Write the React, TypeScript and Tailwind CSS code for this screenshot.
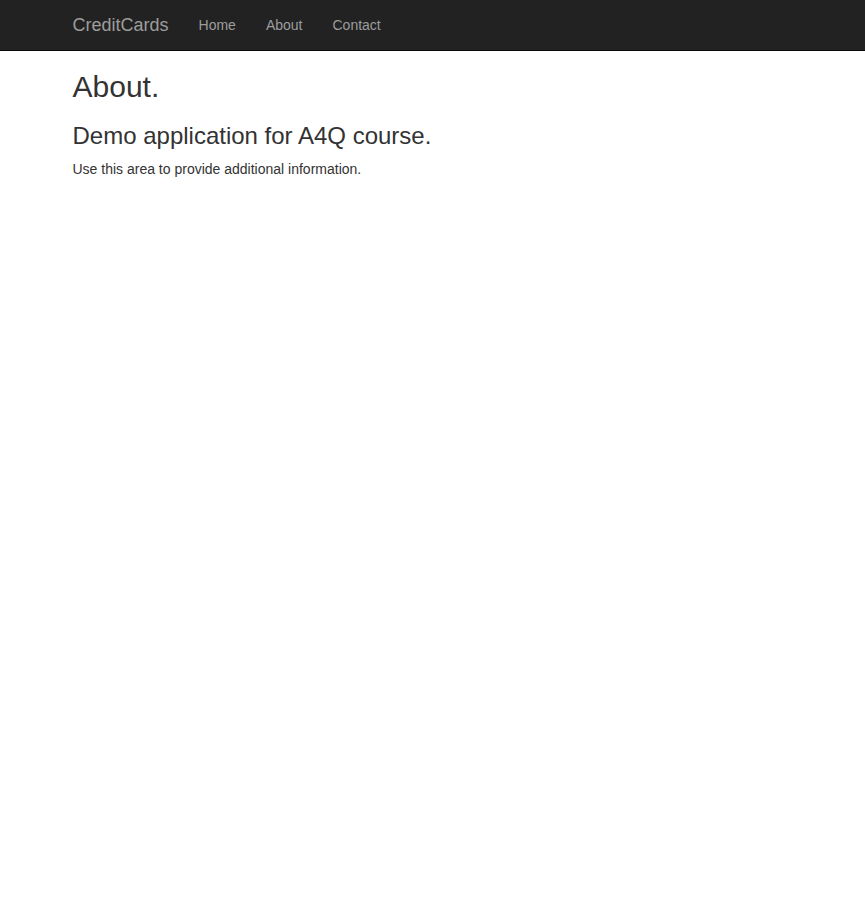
export default function App() {
  const links = ["Home", "About", "Contact"];
  return (
    <div className="min-h-screen bg-white font-['Liberation_Sans',Arial,sans-serif] text-[14px] leading-[20px] text-[#333]">
      {/* Navbar */}
      <nav className="h-[51px] border-b border-[#080808] bg-[#222]">
        <div className="mx-auto flex w-[750px] px-[15px]">
          <a className="-ml-[15px] block h-[50px] px-[15px] py-[15px] text-[18px] leading-[20px] text-[#9d9d9d]">
            CreditCards
          </a>
          <ul className="flex">
            {links.map((l) => (
              <li key={l}>
                <a className="block px-[15px] py-[15px] text-[14px] leading-[20px] text-[#9d9d9d]">{l}</a>
              </li>
            ))}
          </ul>
        </div>
      </nav>

      {/* Body */}
      <div className="mx-auto w-[750px] px-[15px]">
        <h2 className="mt-[19px] mb-[10px] text-[30px] leading-[33px] font-normal">About.</h2>
        <h3 className="mt-[20px] mb-[10px] text-[24px] leading-[26.4px] font-normal">Demo application for A4Q course.</h3>
        <p className="mb-[10px]">Use this area to provide additional information.</p>
      </div>
    </div>
  );
}
